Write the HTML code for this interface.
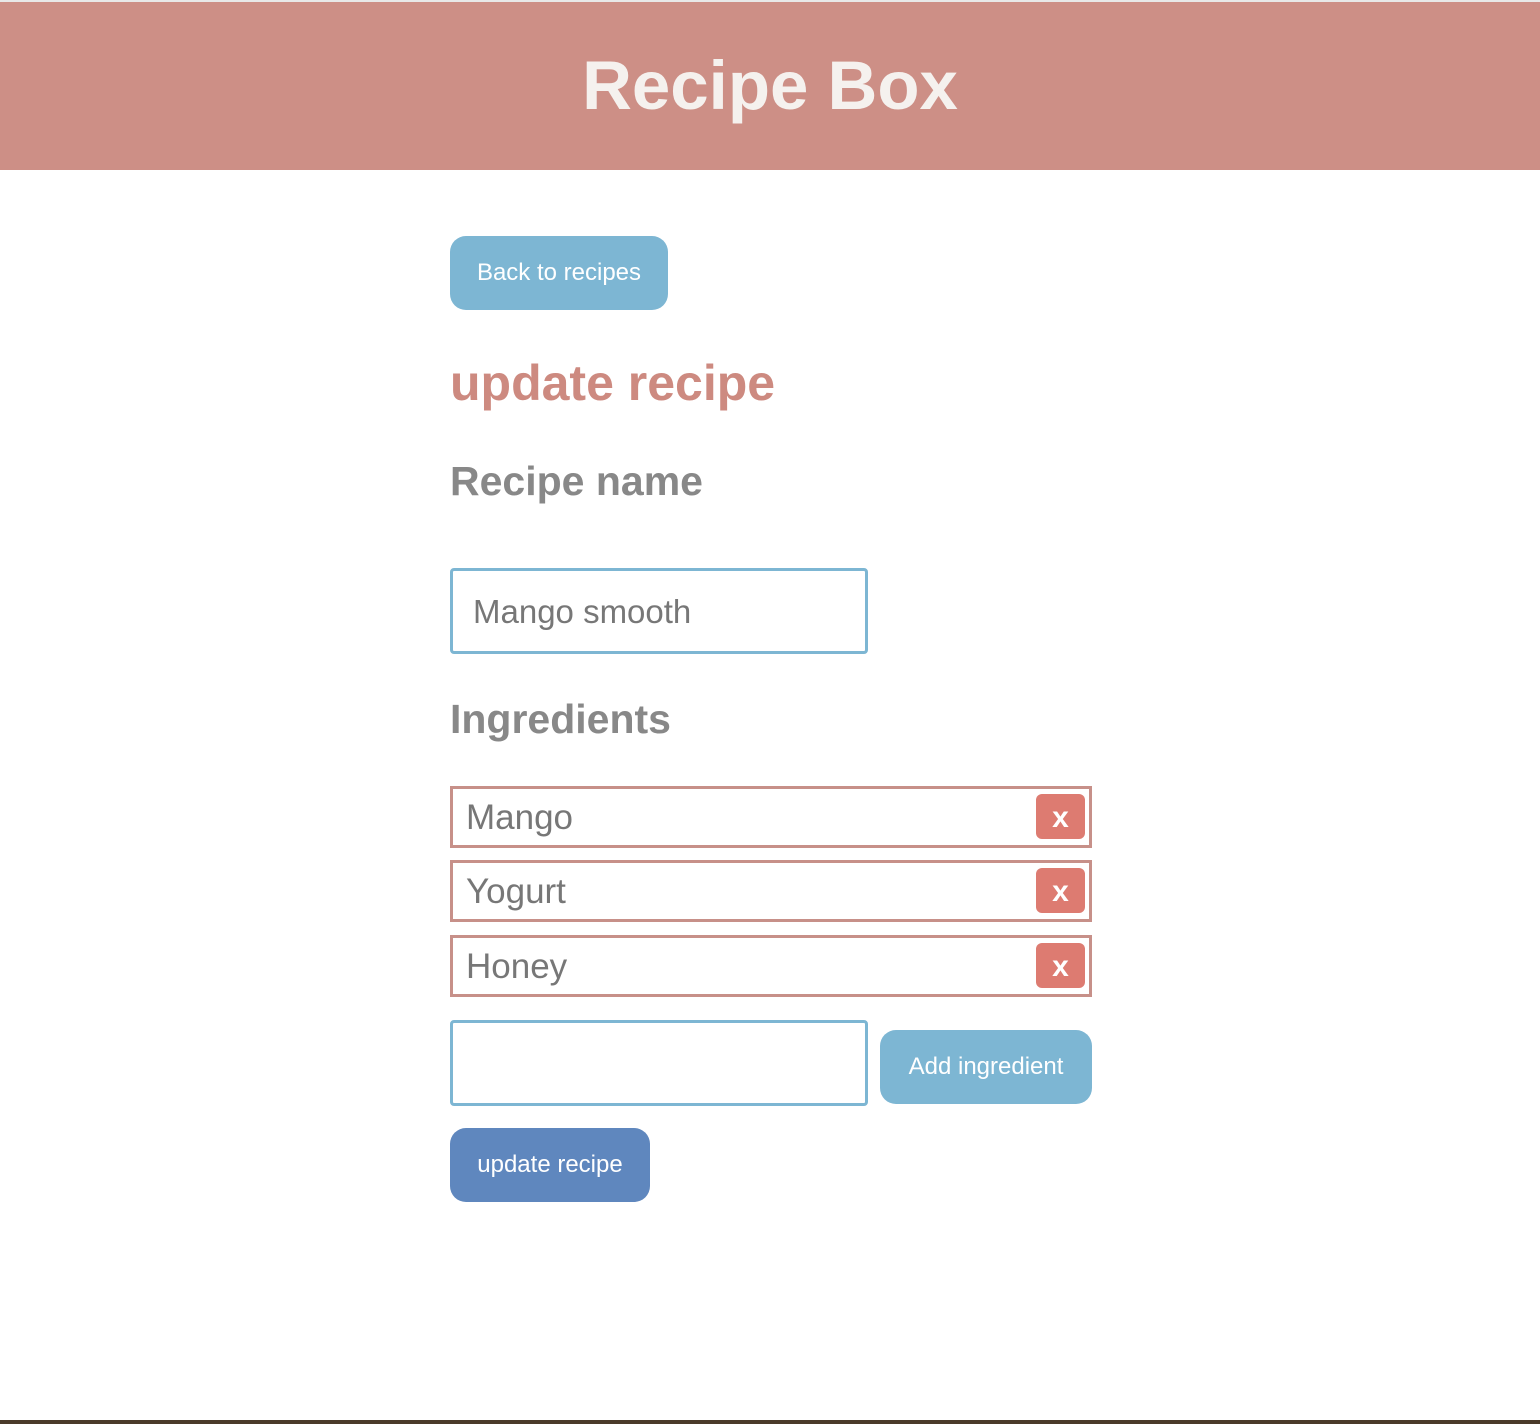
<!DOCTYPE html>
<html><head><style>
body{margin:0;width:1540px;height:1424px;background:#fff;font-family:"Liberation Sans",Arial,sans-serif;position:relative;overflow:hidden}
.hdr{position:absolute;left:0;top:2px;width:1540px;height:168px;background:#cd8f86;color:#f5f1ee;font-weight:bold;font-size:69px;text-align:center;line-height:168px}
.top{position:absolute;left:0;top:0;width:1540px;height:2px;background:#e8e8e8}
.btn{position:absolute;background:#7db6d3;color:#fff;border-radius:16px;text-align:center;font-size:24px}
.inp{position:absolute;border:3px solid #7db6d3;border-radius:4px;box-sizing:border-box;font-size:33px;color:#777;padding-left:20px}
.ing{position:absolute;left:450px;width:642px;height:62px;border:3px solid #c79089;box-sizing:border-box;font-size:35px;color:#777;padding-left:13px;line-height:58px}
.x{position:absolute;right:4px;top:5px;width:49px;height:45px;background:#dd7b71;border-radius:6px;color:#fff;font-size:30px;font-weight:bold;text-align:center;line-height:48px}
h{position:absolute;font-weight:bold;color:#888;font-size:41px}
.bot{position:absolute;left:0;top:1420px;width:1540px;height:4px;background:#4a3a2a}
</style></head><body>
<div class="top"></div>
<div class="hdr">Recipe Box</div>
<div class="btn" style="left:450px;top:236px;width:218px;height:74px;line-height:74px">Back to recipes</div>
<h style="left:450px;top:354px;color:#cd8a80;font-size:50px">update recipe</h>
<h style="left:450px;top:458px">Recipe name</h>
<div class="inp" style="left:450px;top:568px;width:418px;height:86px;line-height:82px">Mango smooth</div>
<h style="left:450px;top:696px">Ingredients</h>
<div class="ing" style="top:786px">Mango<div class="x">x</div></div>
<div class="ing" style="top:860px">Yogurt<div class="x">x</div></div>
<div class="ing" style="top:935px">Honey<div class="x">x</div></div>
<div class="inp" style="left:450px;top:1020px;width:418px;height:86px"></div>
<div class="btn" style="left:880px;top:1030px;width:212px;height:74px;line-height:74px">Add ingredient</div>
<div class="btn" style="left:450px;top:1128px;width:200px;height:74px;line-height:74px;background:#5f87be">update recipe</div>
<div class="bot"></div>
</body></html>
